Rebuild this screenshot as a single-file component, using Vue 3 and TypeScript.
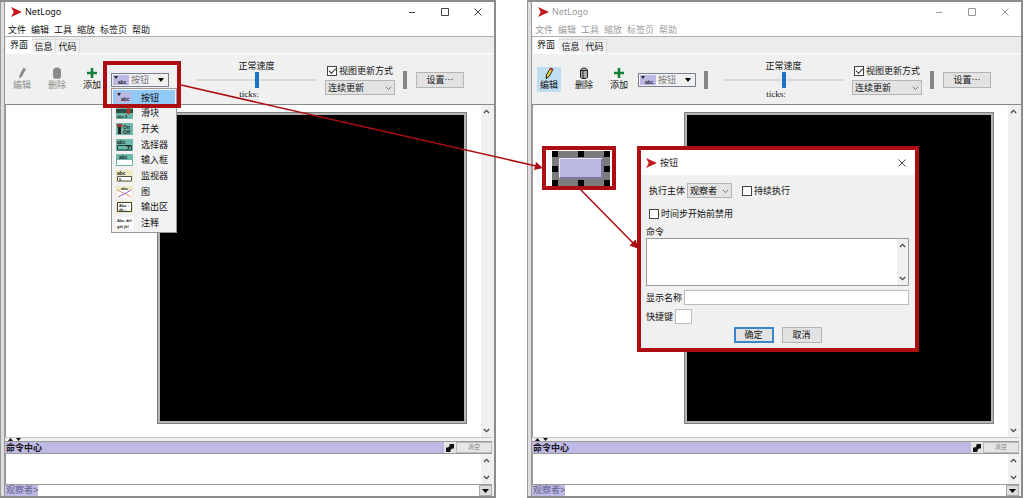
<script setup lang="ts">
import { reactive, ref } from 'vue'

interface Win {
  id: string
  active: boolean
}

const windows: Win[] = [
  { id: 'a', active: true },
  { id: 'b', active: false },
]

const menus = ['文件', '编辑', '工具', '缩放', '标签页', '帮助']
const tabs = ['界面', '信息', '代码']
const widgets = ['按钮', '滑块', '开关', '选择器', '输入框', '监视器', '图', '输出区', '注释']

const speed = ref(50)
const updates = reactive<Record<string, boolean>>({ a: true, b: true })
const forever = ref(false)
const waitTicks = ref(false)
</script>

<template>
  <main class="desk">
    <section v-for="w in windows" :key="w.id" class="win" :class="{ inactive: !w.active }" aria-label="NetLogo">
      <div class="edge"></div>
      <div class="content">
        <header class="title">
          <svg class="logo" viewBox="0 0 12 11"><path d="M0 0 L12 5.5 L0 11 L3 5.5 Z" fill="#c4161c" /></svg>
          <span class="name">NetLogo</span>
          <button class="ctl" aria-label="最小化"><svg viewBox="0 0 8 8"><path d="M1 4.5H7" /></svg></button>
          <button class="ctl" aria-label="最大化"><svg viewBox="0 0 8 8"><path d="M.5 .5H7.5V7.5H.5Z" /></svg></button>
          <button class="ctl" aria-label="关闭"><svg viewBox="0 0 8 8"><path d="M.5 .5L7.5 7.5M7.5 .5L.5 7.5" /></svg></button>
        </header>

        <nav class="menubar">
          <button v-for="m in menus" :key="m">{{ m }}</button>
        </nav>

        <div class="tabs" role="tablist">
          <button v-for="(t, i) in tabs" :key="t" role="tab" :aria-selected="i === 0" :class="{ on: i === 0 }">{{ t }}</button>
        </div>

        <div class="toolbar">
          <div class="tools">
            <button class="tool" :class="{ pressed: !w.active }" :disabled="w.active">
              <svg viewBox="0 0 12 12">
                <path v-if="w.active" d="M3 11.5 L3.5 8 L7.5 .8 L10 2 L6 9.5 Z" fill="#8a8a8a" />
                <g v-else>
                  <path d="M3 11.5 L3.5 8 L7.5 1 L10 2.3 L6 9.5 Z" fill="#f2dc2e" stroke="#222" stroke-width="1" />
                  <path d="M7 1.6 L9.6 3" stroke="#d8261c" stroke-width="1.6" />
                  <path d="M3 11.5 L3.4 9.4 L4.8 10.2 Z" fill="#111" />
                </g>
              </svg>
              <span>编辑</span>
            </button>
            <button class="tool" :disabled="w.active">
              <svg viewBox="0 0 12 12">
                <path v-if="w.active" d="M2 2.5 L4.5 .5 H7.5 L10 2.5 V10 L8.5 11.8 H3.5 L2 10 Z" fill="#8a8a8a" />
                <g v-else>
                  <path d="M2.5 3 L4.5 1 H7.5 L9.5 3 V10 L8 11.5 H4 L2.5 10 Z" fill="#aaa" stroke="#222" />
                  <path d="M2.5 3.5 H9.5 M5 4 V11" stroke="#222" fill="none" />
                </g>
              </svg>
              <span>删除</span>
            </button>
            <button class="tool">
              <svg viewBox="0 0 12 12"><path d="M6 1V11M1 6H11" stroke="#148035" stroke-width="2.6" /></svg>
              <span>添加</span>
            </button>
          </div>

          <div class="combo">
            <select aria-label="控件类型">
              <option v-for="k in widgets" :key="k">{{ k }}</option>
            </select>
            <svg class="combo-icon" viewBox="0 0 16 10">
              <rect width="16" height="10" fill="#bcb8e4" />
              <path d="M1 1H5L3 4Z" fill="#222" />
              <text x="5" y="8.5" class="mini abc">abc</text>
            </svg>
            <svg class="combo-arrow" viewBox="0 0 6 4"><path d="M0 0H6L3 4Z" fill="#000" /></svg>

            <ul v-if="w.active" class="popup" role="listbox" aria-label="控件">
              <li v-for="(k, i) in widgets" :key="k" role="option" :aria-selected="i === 0" :class="{ sel: i === 0 }">
                <svg viewBox="0 0 17 12">
                  <g v-if="i === 0">
                    <rect width="15" height="11" fill="#bcb8e4" />
                    <path d="M1 1H5L3 4Z" fill="#222" /><text x="5" y="9" class="mini abc">abc</text>
                  </g>
                  <g v-else-if="i === 1">
                    <rect width="17" height="12" fill="#6bb8a8" />
                    <rect y="2" width="17" height="4" fill="#2f4f4a" /><rect x="11" y="1" width="3" height="6" fill="#b3392f" />
                    <text x="1" y="11" class="mini">abc 5</text>
                  </g>
                  <g v-else-if="i === 2">
                    <rect width="17" height="12" fill="#6bb8a8" />
                    <rect x="2" y="2" width="3" height="9" fill="#222" /><rect x="1" y="1" width="5" height="3" fill="#a33" />
                    <text x="7" y="5.5" class="mini abc">On</text><text x="7" y="11" class="mini abc">Off</text>
                  </g>
                  <g v-else-if="i === 3">
                    <rect width="17" height="12" fill="#6bb8a8" />
                    <text x="1" y="5" class="mini abc">abc</text>
                    <path d="M1.5 6.5H15.5V11H1.5Z" fill="none" stroke="#25463f" />
                    <path d="M10 7H14L11.500 10.500" fill="none" stroke="#111" />
                  </g>
                  <g v-else-if="i === 4">
                    <rect width="17" height="12" fill="#6bb8a8" />
                    <text x="3" y="5" class="mini abc">abc</text><rect x="1" y="6" width="15" height="5" fill="#fff" />
                  </g>
                  <g v-else-if="i === 5">
                    <rect width="17" height="12" fill="#efe9c4" />
                    <text x="1" y="5" class="mini abc">abc</text>
                    <path d="M1.500 6.500H15.500V11H1.500Z" fill="#fff" stroke="#554" /><text x="3" y="10.500" class="mini">5</text>
                  </g>
                  <g v-else-if="i === 6">
                    <rect width="17" height="12" fill="#efe9c4" /><rect x="1" y="4" width="15" height="8" fill="#fff" />
                    <text x="5" y="4" class="mini">abc</text>
                    <path d="M1 4Q6 6 15 11" fill="none" stroke="#d58a70" /><path d="M2 11L8 8L15 4" fill="none" stroke="#a05ab8" />
                  </g>
                  <g v-else-if="i === 7">
                    <rect width="17" height="12" fill="#efe9c4" />
                    <path d="M1.500 1.500H15.500V10.500H1.500Z" fill="#fff" stroke="#443" />
                    <text x="3" y="6" class="mini">Abc :</text><text x="3" y="10" class="mini">de :.</text>
                  </g>
                  <g v-else>
                    <rect width="17" height="12" fill="#fff" />
                    <text x="1" y="5" class="mini">Abc def</text><text x="1" y="11" class="mini">ghi jkl</text>
                  </g>
                </svg>
                <span>{{ k }}</span>
              </li>
            </ul>
            <div v-if="w.active" class="mark mark-combo"></div>
          </div>

          <div class="bar bar-a"></div>

          <div class="speed">
            <label :for="'speed-' + w.id">正常速度</label>
            <input :id="'speed-' + w.id" v-model="speed" type="range" />
            <span class="ticks">ticks:</span>
          </div>

          <div class="updates">
            <label><input v-model="updates[w.id]" type="checkbox" class="check" />视图更新方式</label>
            <span class="drop">
              <select aria-label="更新方式"><option>连续更新</option></select>
              <svg viewBox="0 0 8 5"><path d="M1 .5L4 3.800L7 .5" /></svg>
            </span>
          </div>

          <div class="bar bar-b"></div>
          <button class="btn settings">设置…</button>
        </div>

        <div class="view">
          <div class="canvas-area">
            <div class="world"></div>
            <div v-if="!w.active" class="mark mark-widget">
              <div class="handles">
                <i v-for="n in 9" :key="n" :class="{ mid: n === 5 }"></i>
                <div class="face"></div>
              </div>
            </div>
          </div>
          <div class="scroll">
            <svg viewBox="0 0 8 5"><path d="M1 4.200L4 1.200L7 4.200" /></svg>
            <svg viewBox="0 0 8 5"><path d="M1 .8L4 3.800L7 .8" /></svg>
          </div>
        </div>

        <div class="split">
          <svg viewBox="0 0 14 3"><path d="M0 3L2.500 0L5 3ZM8 0H13L10.500 3Z" fill="#111" /></svg>
        </div>

        <div class="cc-head">
          <strong>命令中心</strong>
          <button class="flip" aria-label="切换位置">
            <svg viewBox="0 0 8 8"><path d="M3.500 0H8V4.500H6L4.500 6V8H0V3.500H2L3.500 2Z" fill="#111" /></svg>
          </button>
          <button class="clear">清空</button>
        </div>

        <div class="cc-out">
          <div class="out-text"></div>
          <div class="scroll">
            <svg viewBox="0 0 8 5"><path d="M1 4.200L4 1.200L7 4.200" /></svg>
            <svg viewBox="0 0 8 5"><path d="M1 .8L4 3.800L7 .8" /></svg>
          </div>
        </div>

        <div class="cc-in">
          <label :for="'cmd-' + w.id">观察者&gt;</label>
          <input :id="'cmd-' + w.id" type="text" />
          <button aria-label="历史"><svg viewBox="0 0 7 4"><path d="M0 0H7L3.500 4Z" fill="#000" /></svg></button>
        </div>
      </div>

      <form v-if="!w.active" class="dialog mark" role="dialog" aria-label="按钮" @submit.prevent>
        <header class="d-title">
          <svg class="logo" viewBox="0 0 12 11"><path d="M0 0 L12 5.5 L0 11 L3 5.5 Z" fill="#c4161c" /></svg>
          <span class="name">按钮</span>
          <button type="button" class="d-close" aria-label="关闭"><svg viewBox="0 0 8 8"><path d="M.5 .5L7.5 7.5M7.5 .5L.5 7.5" /></svg></button>
        </header>
        <div class="d-body">
          <div class="row agents">
            <label for="agent">执行主体</label>
            <span class="drop">
              <select id="agent"><option>观察者</option></select>
              <svg viewBox="0 0 8 5"><path d="M1 .5L4 3.800L7 .5" /></svg>
            </span>
            <label class="tick"><input v-model="forever" type="checkbox" class="check" />持续执行</label>
          </div>
          <div class="row wait">
            <label class="tick"><input v-model="waitTicks" type="checkbox" class="check" />时间步开始前禁用</label>
          </div>
          <label for="commands" class="cmd-label">命令</label>
          <div class="commands">
            <textarea id="commands"></textarea>
            <div class="scroll">
              <svg viewBox="0 0 8 5"><path d="M1 4.200L4 1.200L7 4.200" /></svg>
              <svg viewBox="0 0 8 5"><path d="M1 .8L4 3.800L7 .8" /></svg>
            </div>
          </div>
          <div class="row field">
            <label for="display">显示名称</label>
            <input id="display" type="text" class="grow" />
          </div>
          <div class="row field">
            <label for="key">快捷键</label>
            <input id="key" type="text" class="key" />
          </div>
          <div class="row actions">
            <button type="submit" class="btn ok">确定</button>
            <button type="button" class="btn">取消</button>
          </div>
        </div>
      </form>
    </section>

    <svg class="arrows" viewBox="0 0 1024 498" aria-hidden="true">
      <path d="M181 85L536 166M580 189L633 243" fill="none" stroke="#ac0d12" stroke-width="1.5" />
      <path d="M543 168L534 170L536 162ZM639 249L629.500 245.500L635.500 239.500Z" fill="#ac0d12" />
    </svg>
  </main>
</template>

<style>
body {
  margin: 0;
  background: #fff;
}
</style>

<style scoped>
* {
  box-sizing: border-box;
}
.desk {
  position: relative;
  display: grid;
  grid-template-columns: 1fr 1fr;
  gap: 31px;
  padding-right: 1px;
  min-height: 100vh;
  font: 9px/12px "Liberation Sans", "Noto Sans CJK SC", sans-serif;
  color: #111;
}
button,
input,
select,
textarea {
  font: inherit;
  color: inherit;
  margin: 0;
  padding: 0;
  border: 0;
  border-radius: 0;
  background: none;
  outline: 0;
}
button {
  white-space: nowrap;
}
svg {
  display: block;
  flex: none;
}
.win {
  position: relative;
  display: flex;
  min-width: 0;
  border: solid #8c8c8c;
  border-width: 2px 2px 2px 0;
  background: #f0f0f0;
}
.edge {
  width: 5px;
  flex: none;
  border-left: 1px solid #999;
  border-right: 1px solid #999;
  background: #dedede;
}
.content {
  flex: 1;
  min-width: 0;
  display: flex;
  flex-direction: column;
}
.title {
  display: flex;
  align-items: center;
  height: 20px;
  padding: 0 0 1px 6px;
  background: #fff;
}
.logo {
  width: 11px;
  height: 10px;
}
.name {
  flex: 1;
  margin-left: 3px;
  font-family: "Noto Sans", "Noto Sans CJK SC", sans-serif;
}
.ctl {
  display: grid;
  place-items: center;
  width: 33px;
  height: 19px;
}
.ctl svg,
.d-close svg {
  width: 8px;
  height: 8px;
  fill: none;
  stroke: #444;
}
.inactive .name,
.inactive .menubar {
  color: #999;
}
.inactive .ctl svg {
  stroke: #999;
}
.menubar {
  display: flex;
  gap: 5px;
  height: 15px;
  padding: 1px 0 0 3px;
  background: #fff;
  border-bottom: 1px solid #b0b0b0;
}
.tabs {
  display: flex;
  align-items: flex-end;
  height: 17px;
  padding-left: 1px;
  background: #ececec;
  border-bottom: 1px solid #fff;
}
.tabs button {
  width: 24px;
  height: 14px;
  border: 1px solid #dcdcdc;
  border-width: 1px 1px 0 0;
  background: #f0f0f0;
}
.tabs .on {
  width: 26px;
  height: 16px;
  border: 0;
  background: #fff;
}
.toolbar {
  display: flex;
  align-items: center;
  height: 51px;
  padding: 2px 30px 0 5px;
  border-bottom: 1px solid #8a8a8a;
}
.tools {
  display: flex;
  gap: 11px;
  padding-bottom: 2px;
}
.tool {
  display: flex;
  flex-direction: column;
  align-items: center;
  width: 24px;
  height: 25px;
}
.tool svg {
  width: 12px;
  height: 12px;
}
.tool:disabled {
  color: #8c8c8c;
}
.pressed {
  background: #c0def2;
}
.combo {
  position: relative;
  width: 58px;
  height: 14px;
  margin-left: 7px;
}
.combo select {
  display: block;
  width: 100%;
  height: 100%;
  padding-left: 19px;
  appearance: none;
  border: 1px solid #77808e;
  background: #f0f0f0;
  color: #777;
  line-height: 12px;
}
.combo-icon {
  position: absolute;
  left: 2px;
  top: 2px;
  width: 16px;
  height: 10px;
}
.combo-arrow {
  position: absolute;
  right: 5px;
  top: 5px;
  width: 6px;
  height: 4px;
}
.mini {
  font: bold 4px "Liberation Sans", sans-serif;
  fill: #222;
}
.abc {
  font-size: 5px;
}
.popup {
  position: absolute;
  z-index: 3;
  left: 0;
  top: 15px;
  width: 66px;
  height: 145px;
  margin: 0;
  padding: 1px;
  list-style: none;
  display: grid;
  grid-auto-rows: 1fr;
  border: 1px solid #999;
  background: #f2f2f2;
}
.popup li {
  display: flex;
  align-items: center;
  gap: 8px;
  padding-left: 3px;
  line-height: 12px;
}
.popup svg {
  width: 17px;
  height: 12px;
}
.popup .sel {
  background: #90c8f6;
}
.mark {
  border: 4px solid #ac0d12;
}
.mark-combo {
  position: absolute;
  z-index: 4;
  left: -8px;
  top: -12px;
  width: 78px;
  height: 47px;
  pointer-events: none;
}
.bar {
  width: 4px;
  height: 18px;
  background: #868686;
}
.bar-a {
  margin: 0 15px 0 8px;
}
.bar-b {
  margin: 0 9px 0 8px;
}
.speed {
  flex: 1;
  min-width: 0;
  display: flex;
  flex-direction: column;
  align-items: center;
}
.speed input {
  width: 100%;
  height: 16px;
  appearance: none;
}
.speed input::-webkit-slider-runnable-track {
  height: 2px;
  background: #d9d9d9;
}
.speed input::-webkit-slider-thumb {
  appearance: none;
  width: 4px;
  height: 16px;
  margin-top: -7px;
  background: #1976c5;
}
.ticks {
  margin-right: 15px;
  font: 9px/12px "Liberation Serif", serif;
}
.updates {
  width: 70px;
  margin-left: 8px;
  white-space: nowrap;
}
.updates label,
.tick {
  display: flex;
  align-items: center;
  gap: 2px;
}
.updates label {
  padding-left: 2px;
  margin-bottom: 3px;
}
.check {
  flex: none;
  appearance: none;
  display: grid;
  place-items: center;
  width: 10px;
  height: 10px;
  border: 1px solid #444;
  background: #fff;
}
.check:checked::after {
  content: "";
  width: 6px;
  height: 3px;
  margin-bottom: 2px;
  border: solid #333;
  border-width: 0 0 1px 1px;
  transform: rotate(-45deg);
}
.drop {
  position: relative;
  display: block;
  height: 15px;
}
.drop select {
  display: block;
  width: 100%;
  height: 100%;
  padding-left: 2px;
  appearance: none;
  border: 1px solid #b4b4b4;
  background: #e3e3e3;
}
.drop svg {
  position: absolute;
  right: 3px;
  top: 6px;
  width: 7px;
  height: 5px;
  fill: none;
  stroke: #666;
}
.btn {
  width: 40px;
  height: 16px;
  border: 1px solid #b4b4b4;
  background: #e2e2e2;
}
.settings {
  width: 48px;
  font-family: "Noto Sans CJK SC", sans-serif;
}
.view {
  flex: 1;
  display: flex;
  min-height: 0;
  margin-right: 2px;
  background: #fff;
}
.canvas-area {
  position: relative;
  flex: 1;
  display: flex;
  padding: 7px 14px 13px 151px;
  border-left: 1px solid #999;
}
.world {
  flex: 1;
  border: 1px solid #808080;
  background: #000;
  box-shadow: inset 0 0 0 2px #b4b4b4;
}
.scroll {
  display: flex;
  flex-direction: column;
  justify-content: space-between;
  align-items: center;
  width: 11px;
  padding: 4px 0;
  background: #f0f0f0;
}
.scroll svg {
  width: 7px;
  height: 5px;
  fill: none;
  stroke: #444;
  stroke-width: 1.4px;
}
.split {
  height: 4px;
  margin-right: 2px;
  border-top: 1px solid #c4c4c4;
}
.split svg {
  width: 14px;
  height: 3px;
  margin-left: 3px;
}
.cc-head {
  display: flex;
  align-items: center;
  height: 13px;
  margin-right: 2px;
  border: solid #999;
  border-width: 1px 0;
  background: #bfb9e6;
}
.cc-head strong {
  flex: 1;
  padding-left: 1px;
}
.flip {
  display: grid;
  place-items: center;
  width: 12px;
  height: 11px;
  background: #e6e6e6;
}
.flip svg {
  width: 8px;
  height: 8px;
}
.clear {
  width: 36px;
  height: 11px;
  border: 1px solid #bbb;
  background: #e6e6e6;
  color: #777;
  font-size: 6px;
  line-height: 9px;
}
.cc-out {
  display: flex;
  height: 31px;
  margin-right: 2px;
  border: solid #999;
  border-width: 0 0 1px 1px;
}
.out-text {
  flex: 1;
  background: #fff;
}
.cc-in {
  display: flex;
  height: 11px;
  margin-right: 2px;
  line-height: 11px;
}
.cc-in label {
  padding-left: 1px;
  background: #bfb9e6;
  color: #62628c;
}
.cc-in input {
  flex: 1;
  min-width: 0;
  height: 11px;
  background: #fff;
}
.cc-in button {
  display: grid;
  place-items: center;
  width: 13px;
  height: 11px;
  border: 1px solid #aaa;
  background: #dedede;
}
.cc-in svg {
  width: 7px;
  height: 4px;
}
.mark-widget {
  position: absolute;
  left: 9px;
  top: 41px;
  width: 74px;
  height: 44px;
  padding: 1px 2px 0 6px;
  background: #fff;
}
.handles {
  position: relative;
  display: grid;
  grid-template-columns: repeat(3, 6px);
  grid-template-rows: repeat(3, 6px);
  justify-content: space-between;
  align-content: space-between;
  width: 58px;
  height: 35px;
  background: #7b7b7b;
}
.handles i {
  background: #000;
}
.handles .mid {
  background: none;
}
.face {
  position: absolute;
  inset: 7px;
  border: 1px solid #e8e6fa;
  border-right: 2px solid #7f7b9e;
  border-bottom: 2px solid #7f7b9e;
  background: #bcb8e4;
}
.dialog {
  position: absolute;
  z-index: 2;
  left: 110px;
  top: 144px;
  width: 282px;
  background: #f0f0f0;
}
.dialog .name {
  color: #222;
}
.d-title {
  display: flex;
  align-items: center;
  height: 25px;
  padding: 0 9px 0 5px;
  background: #fff;
}
.d-body {
  padding: 8px 6px 5px 5px;
}
.row {
  display: flex;
  align-items: center;
}
.agents {
  padding-left: 3px;
}
.agents .drop {
  width: 45px;
  margin: 0 10px 0 2px;
}
.wait {
  height: 16px;
  margin: 8px 0 4px;
  padding-left: 3px;
}
.cmd-label {
  display: block;
  height: 12px;
}
.commands {
  display: flex;
  height: 48px;
  border: 1px solid #999;
}
.commands textarea {
  flex: 1;
  resize: none;
  background: #fff;
}
.field {
  gap: 2px;
  margin-top: 4px;
}
.field input {
  height: 15px;
  border: 1px solid #bbb;
  background: #fff;
}
.field .grow {
  flex: 1;
}
.field .key {
  width: 17px;
}
.actions {
  justify-content: center;
  gap: 8px;
  margin-top: 3px;
}
.ok {
  border: 2px solid #3a86cc;
}
.arrows {
  position: absolute;
  z-index: 5;
  left: 0;
  top: 0;
  width: 1024px;
  height: 498px;
  pointer-events: none;
}
</style>
